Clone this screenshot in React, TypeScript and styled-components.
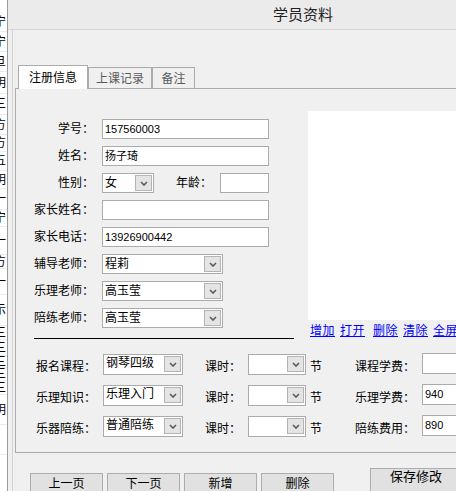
import styled, { createGlobalStyle } from 'styled-components'

const GlobalStyle = createGlobalStyle`
  html, body {
    margin: 0;
    padding: 0;
    background: #fff;
  }
  body {
    font-family: "Liberation Sans", "Noto Sans CJK SC", sans-serif;
    font-size: 12px;
    color: #000;
  }
  * {
    box-sizing: border-box;
  }
`

// edge of a window lying behind the dialog: only the right edge of each glyph shows
const stripRows = [
  { ch: '宁', h: 20 }, { ch: '宁', h: 20 }, { ch: '旦', h: 20 }, { ch: '明', h: 22 },
  { ch: '三', h: 21 }, { ch: '方', h: 20 }, { ch: '方', h: 17 }, { ch: '五', h: 19 },
  { ch: '明', h: 18 }, { ch: '一', h: 21 }, { ch: '宁', h: 17 }, { ch: '一', h: 28 },
  { ch: '方', h: 14 }, { ch: '一', h: 26 }, { ch: '示', h: 31 }, { ch: '三', h: 14 },
  { ch: '三', h: 16 }, { ch: '三', h: 12 }, { ch: '三', h: 13 }, { ch: '三', h: 14 },
  { ch: '明', h: 30 }, { ch: '', h: 30 },
]

const feeRows = [
  { label: '报名课程：', course: '钢琴四级', feeLabel: '课程学费：', fee: '' },
  { label: '乐理知识：', course: '乐理入门', feeLabel: '乐理学费：', fee: '940' },
  { label: '乐器陪练：', course: '普通陪练', feeLabel: '陪练费用：', fee: '890' },
]

const ChevronDown = () => (
  <svg width="8" height="5" viewBox="0 0 8 5">
    <polyline points="1,1 4,4 7,1" fill="none" stroke="#5a5a5a" strokeWidth="1.6" />
  </svg>
)

const Combo = ({ value, width, top }: { value?: string; width: number; top?: boolean }) => (
  <ComboBox $w={width} $top={top}>
    <ComboText $top={top}>{value}</ComboText>
    <DropButton>
      <ChevronDown />
    </DropButton>
  </ComboBox>
)

const App = () => {
  return (
    <Screen>
      <GlobalStyle />
      <BackStrip>
        {stripRows.map((r, i) => (
          <StripRow key={i} $h={r.h}>
            <span>{r.ch}</span>
          </StripRow>
        ))}
      </BackStrip>

      <Dialog>
        <TitleBar>学员资料</TitleBar>
        <Body>
          <Frame>
            <TabStrip>
              <Tab $active $w={70}>注册信息</Tab>
              <Tab $w={64}>上课记录</Tab>
              <Tab $w={43}>备注</Tab>
            </TabStrip>
            <Panel>
              <TopSection>
                <LeftCol>
                  <FormGrid>
                    <Label>学号：</Label>
                    <TextInput $w={167}>157560003</TextInput>

                    <Label>姓名：</Label>
                    <TextInput $w={167}>扬子琦</TextInput>

                    <Label>性别：</Label>
                    <InlineCell>
                      <Combo value="女" width={52} />
                      <AgeLabel>年龄：</AgeLabel>
                      <TextInput $w={49} />
                    </InlineCell>

                    <Label>家长姓名：</Label>
                    <TextInput $w={167} />

                    <Label>家长电话：</Label>
                    <TextInput $w={167}>13926900442</TextInput>

                    <Label>辅导老师：</Label>
                    <Combo value="程莉" width={121} />

                    <Label>乐理老师：</Label>
                    <Combo value="高玉莹" width={121} />

                    <Label>陪练老师：</Label>
                    <Combo value="高玉莹" width={121} />
                  </FormGrid>
                  <Separator />
                </LeftCol>

                <RightCol>
                  <PictureBox />
                  <LinkRow>
                    <Link>增加</Link>
                    <Link $extra>打开</Link>
                    <Link>删除</Link>
                    <Link>清除</Link>
                    <Link>全屏</Link>
                  </LinkRow>
                </RightCol>
              </TopSection>

              <FeeGrid>
                {feeRows.map((row) => (
                  <FeeLine key={row.label}>
                    <RowLabel $w={80}>{row.label}</RowLabel>
                    <Combo value={row.course} width={80} top />
                    <RowLabel $w={36} $ml={22}>课时：</RowLabel>
                    <Combo width={58} top />
                    <RowLabel $w={12} $ml={4}>节</RowLabel>
                    <RowLabel $w={60} $ml={26}>{row.feeLabel}</RowLabel>
                    <FeeInput>{row.fee}</FeeInput>
                  </FeeLine>
                ))}
              </FeeGrid>
            </Panel>

            <ButtonRow>
              <NavButton>上一页</NavButton>
              <NavButton>下一页</NavButton>
              <NavButton>新增</NavButton>
              <NavButton>删除</NavButton>
              <SaveButton>保存修改</SaveButton>
            </ButtonRow>
          </Frame>
        </Body>
      </Dialog>
    </Screen>
  )
}

const Screen = styled.div`
  width: 456px;
  height: 491px;
  overflow: hidden;
  display: flex;
  background: #fff;
`

const BackStrip = styled.div`
  width: 7px;
  flex-shrink: 0;
  overflow: hidden;
  display: flex;
  flex-direction: column;
  padding-top: 12px;
  background: #fff;
`

const StripRow = styled.div<{ $h: number }>`
  height: ${(p) => p.$h}px;
  flex-shrink: 0;
  display: flex;
  align-items: center;
  border-bottom: 1px solid #ececec;
  font-size: 12px;
  line-height: 14px;
  white-space: nowrap;

  span {
    margin-left: -6px;
  }
`

const Dialog = styled.div`
  width: 591px;
  flex-shrink: 0;
  display: flex;
  flex-direction: column;
  border-left: 1px solid #9b9b9b;
  background: #f0f0f0;
`

const TitleBar = styled.div`
  height: 30px;
  flex-shrink: 0;
  display: flex;
  align-items: center;
  justify-content: center;
  padding-bottom: 1px;
  background: #ebebeb;
  border-bottom: 1px solid #d6d6d6;
  font-size: 15px;
  line-height: 1;
  color: #222;
`

const Body = styled.div`
  flex: 1;
  display: flex;
  padding-left: 4px;
`

const Frame = styled.div`
  flex: 1;
  display: flex;
  flex-direction: column;
  padding-top: 35px;
  padding-left: 1px;
  border-left: 1px solid #d2d2d2;
`

const TabStrip = styled.div`
  display: flex;
  align-items: flex-end;
  padding-left: 3px;
  margin-left: 1px;
  position: relative;
  z-index: 1;
`

const Tab = styled.div<{ $active?: boolean; $w: number }>`
  width: ${(p) => p.$w}px;
  height: ${(p) => (p.$active ? 24 : 21)}px;
  margin-bottom: ${(p) => (p.$active ? -1 : 0)}px;
  display: flex;
  align-items: center;
  justify-content: center;
  border: 1px solid #acacac;
  border-bottom: none;
  background: ${(p) => (p.$active ? '#fff' : '#f0f0f0')};
  color: ${(p) => (p.$active ? '#000' : '#5a5a5a')};
  font-size: 12px;
  line-height: 14px;
  padding-top: ${(p) => (p.$active ? 0 : 1)}px;
`

const Panel = styled.div`
  height: 365px;
  margin-left: 1px;
  display: flex;
  flex-direction: column;
  border: 1px solid #acacac;
  border-right: none;
  background: #f0f0f0;
`

const TopSection = styled.div`
  display: flex;
`

const LeftCol = styled.div`
  width: 292px;
  flex-shrink: 0;
  padding-top: 30px;
  display: flex;
  flex-direction: column;
`

const FormGrid = styled.div`
  display: grid;
  grid-template-columns: 78px 1fr;
  grid-auto-rows: 20px;
  column-gap: 8px;
  row-gap: 7px;
  align-items: center;
`

const Label = styled.div`
  text-align: right;
  font-size: 12px;
  line-height: 20px;
  white-space: nowrap;
`

const InlineCell = styled.div`
  display: flex;
  align-items: center;
`

const AgeLabel = styled.div`
  width: 36px;
  margin: 0 8px 0 22px;
  font-size: 12px;
  line-height: 20px;
  white-space: nowrap;
`

const TextInput = styled.div<{ $w: number }>`
  width: ${(p) => p.$w}px;
  height: 20px;
  padding-left: 2px;
  border: 1px solid #ababab;
  background: #fff;
  font-size: 11px;
  line-height: 18px;
  white-space: nowrap;
`

const ComboBox = styled.div<{ $w: number; $top?: boolean }>`
  width: ${(p) => p.$w}px;
  height: ${(p) => (p.$top ? 21 : 20)}px;
  display: flex;
  justify-content: space-between;
  align-items: ${(p) => (p.$top ? 'flex-start' : 'center')};
  border: 1px solid #ababab;
  background: #fff;
`

const ComboText = styled.span<{ $top?: boolean }>`
  padding-left: 2px;
  padding-top: ${(p) => (p.$top ? 1 : 0)}px;
  font-size: 12px;
  line-height: 14px;
  white-space: nowrap;
`

const DropButton = styled.div`
  width: 17px;
  height: 16px;
  margin: 1px;
  flex-shrink: 0;
  display: flex;
  align-items: center;
  justify-content: center;
  border: 1px solid #b4b4b4;
  background: #e4e4e4;
`

const Separator = styled.div`
  width: 260px;
  height: 1px;
  margin: 10px 0 0 18px;
  background: #000;
`

const RightCol = styled.div`
  flex: 1;
  padding-top: 22px;
  display: flex;
  flex-direction: column;
`

const PictureBox = styled.div`
  height: 209px;
  background: #fff;
`

const LinkRow = styled.div`
  display: flex;
  padding-left: 2px;
  margin-top: 4px;
  white-space: nowrap;
`

const Link = styled.a<{ $extra?: boolean }>`
  margin-right: ${(p) => (p.$extra ? 8 : 5)}px;
  flex-shrink: 0;
  letter-spacing: 0.5px;
  color: #0000ff;
  text-decoration: underline;
  font-size: 12px;
  line-height: 15px;
  cursor: pointer;
`

const FeeGrid = styled.div`
  display: flex;
  flex-direction: column;
  gap: 10px;
  padding-top: 15px;
`

const FeeLine = styled.div`
  height: 21px;
  display: flex;
  align-items: flex-start;
`

const RowLabel = styled.div<{ $w: number; $ml?: number }>`
  width: ${(p) => p.$w}px;
  flex-shrink: 0;
  margin-left: ${(p) => p.$ml ?? 0}px;
  margin-right: 7px;
  padding-top: 6px;
  text-align: right;
  font-size: 12px;
  line-height: 15px;
  white-space: nowrap;
`

const FeeInput = styled.div`
  width: 90px;
  height: 21px;
  flex-shrink: 0;
  margin-top: -1px;
  padding: 2px 0 0 2px;
  border: 1px solid #ababab;
  background: #fff;
  font-size: 11px;
  line-height: 14px;
`

const ButtonRow = styled.div`
  display: flex;
  align-items: flex-start;
  gap: 4px;
  padding-left: 16px;
  margin-top: 15px;
`

const NavButton = styled.div`
  width: 73px;
  height: 28px;
  margin-top: 5px;
  flex-shrink: 0;
  padding-top: 2px;
  text-align: center;
  border: 1px solid #adadad;
  background: #e1e1e1;
  font-size: 12px;
  line-height: 16px;
`

const SaveButton = styled.div`
  width: 92px;
  height: 30px;
  margin-left: 32px;
  flex-shrink: 0;
  text-align: center;
  border: 1px solid #adadad;
  background: #e1e1e1;
  font-size: 13px;
  line-height: 16px;
`

export default App
